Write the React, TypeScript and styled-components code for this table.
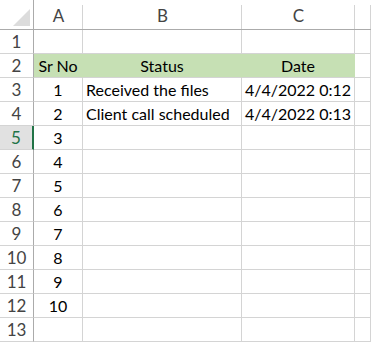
import { FC } from "react";
import styled, { createGlobalStyle } from "styled-components";

const GlobalStyle = createGlobalStyle`
  html, body {
    margin: 0;
    padding: 0;
    background: #ffffff;
  }
  body {
    font-family: Lato, "Open Sans", sans-serif;
  }
`;

const GRID = "#d4d4d4";
const HEADER_LINE = "#ababab";
const EXCEL_GREEN = "#217346";

const Sheet = styled.div`
  display: grid;
  grid-template-columns: 34px 49px 159px 113px 16px;
  grid-template-rows: 30px repeat(13, 24px);
  width: 371px;
  height: 342px;
  overflow: hidden;
  background: #ffffff;
  font-size: 16px;
  color: #000000;
`;

const Corner = styled.div`
  display: flex;
  align-items: flex-end;
  justify-content: flex-end;
  padding: 0 3px 3px 0;
  box-sizing: border-box;
  border-right: 1px solid ${HEADER_LINE};
  border-bottom: 1px solid ${HEADER_LINE};
`;

const Triangle = styled.div`
  width: 0;
  height: 0;
  border-left: 17px solid transparent;
  border-bottom: 17px solid #dcdcdc;
`;

const ColHeader = styled.div`
  position: relative;
  display: flex;
  align-items: center;
  justify-content: center;
  box-sizing: border-box;
  border-bottom: 1px solid ${HEADER_LINE};
  color: #444444;
  font-size: 17px;
  padding-top: 2px;

  &::after {
    content: "";
    position: absolute;
    right: 0;
    top: 5px;
    bottom: 0;
    width: 1px;
    background: ${GRID};
  }
`;

interface IRowHeader {
  $selected?: boolean;
}

const RowHeader = styled.div<IRowHeader>`
  display: flex;
  align-items: center;
  justify-content: center;
  box-sizing: border-box;
  border-bottom: 1px solid ${GRID};
  border-right: ${({ $selected }) =>
    $selected ? `2px solid ${EXCEL_GREEN}` : `1px solid ${HEADER_LINE}`};
  background: ${({ $selected }) => ($selected ? "#e1e1e1" : "#ffffff")};
  color: ${({ $selected }) => ($selected ? EXCEL_GREEN : "#444444")};
  font-size: 17px;
`;

interface ICell {
  $align?: "left" | "center" | "right";
  $fill?: string;
}

const Cell = styled.div<ICell>`
  display: flex;
  align-items: center;
  justify-content: ${({ $align }) =>
    $align === "center"
      ? "center"
      : $align === "right"
      ? "flex-end"
      : "flex-start"};
  padding: 0 3px;
  box-sizing: border-box;
  white-space: nowrap;
  overflow: hidden;
  border-right: 1px solid ${({ $fill }) => $fill || GRID};
  border-bottom: 1px solid ${GRID};
  background: ${({ $fill }) => $fill || "transparent"};
`;

const HEADER_FILL = "#c6e0b4";

const columns = ["A", "B", "C", ""];

const entries = [
  { status: "Received the files", date: "4/4/2022 0:12" },
  { status: "Client call scheduled", date: "4/4/2022 0:13" },
];

const SELECTED_ROW = 5;

const App: FC = () => {
  const rows: JSX.Element[] = [];

  for (let r = 1; r <= 13; r++) {
    rows.push(
      <RowHeader key={`rh-${r}`} $selected={r === SELECTED_ROW}>
        {r}
      </RowHeader>
    );

    if (r === 2) {
      rows.push(
        <Cell key="a2" $align="center" $fill={HEADER_FILL}>Sr No</Cell>,
        <Cell key="b2" $align="center" $fill={HEADER_FILL}>Status</Cell>,
        <Cell key="c2" $align="center" $fill={HEADER_FILL}>Date</Cell>,
        <Cell key="d2" />
      );
      continue;
    }

    const srNo = r >= 3 && r <= 12 ? r - 2 : null;
    const entry = srNo ? entries[srNo - 1] : undefined;

    rows.push(
      <Cell key={`a-${r}`} $align="center">{srNo}</Cell>,
      <Cell key={`b-${r}`}>{entry?.status}</Cell>,
      <Cell key={`c-${r}`} $align="right">{entry?.date}</Cell>,
      <Cell key={`d-${r}`} />
    );
  }

  return (
    <>
      <GlobalStyle />
      <Sheet>
        <Corner>
          <Triangle />
        </Corner>
        {columns.map((c, i) => (
          <ColHeader key={`col-${i}`}>{c}</ColHeader>
        ))}
        {rows}
      </Sheet>
    </>
  );
};

export default App;
